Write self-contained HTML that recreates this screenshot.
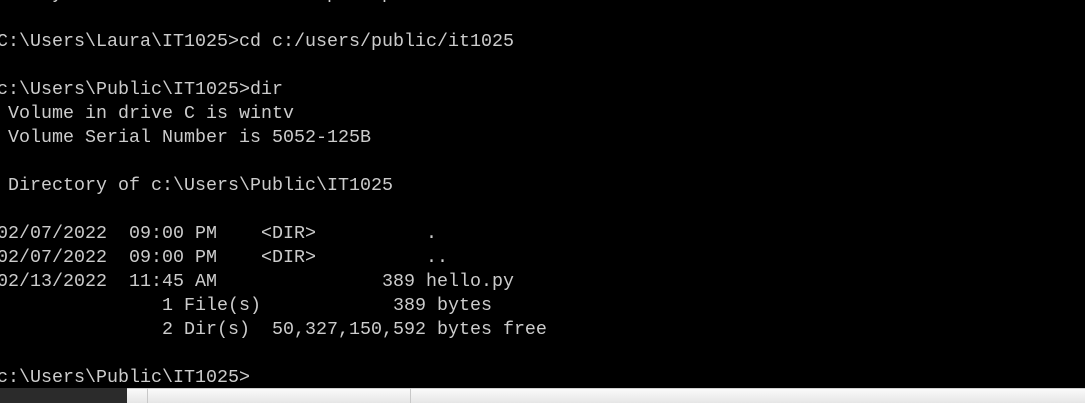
<!DOCTYPE html>
<html><head><meta charset="utf-8"><style>
html,body{margin:0;padding:0;background:#000;width:1085px;height:403px;overflow:hidden;position:relative}
pre{position:absolute;left:-3px;top:-18px;margin:0;font-family:"Liberation Mono",monospace;font-size:18.33px;line-height:24px;color:#cccccc;white-space:pre}
.bar{position:absolute;top:388px;left:0;width:1085px;height:15px;background:linear-gradient(#fafafa,#e6e6e6);border-top:1px solid #cfcfcf;box-sizing:border-box}
.dark{position:absolute;top:388px;left:0;width:127px;height:15px;background:#2b2b2b}
.v{position:absolute;top:388px;width:1px;height:15px;background:#c8c8c8}
</style></head><body>
<pre>     y                        p    p

C:\Users\Laura\IT1025>cd c:/users/public/it1025

c:\Users\Public\IT1025>dir
 Volume in drive C is wintv
 Volume Serial Number is 5052-125B

 Directory of c:\Users\Public\IT1025

02/07/2022  09:00 PM    &lt;DIR&gt;          .
02/07/2022  09:00 PM    &lt;DIR&gt;          ..
02/13/2022  11:45 AM               389 hello.py
               1 File(s)            389 bytes
               2 Dir(s)  50,327,150,592 bytes free

c:\Users\Public\IT1025&gt;</pre>
<div class="bar"></div>
<div class="dark"></div>
<div class="v" style="left:147px"></div>
<div class="v" style="left:410px"></div>
</body></html>
